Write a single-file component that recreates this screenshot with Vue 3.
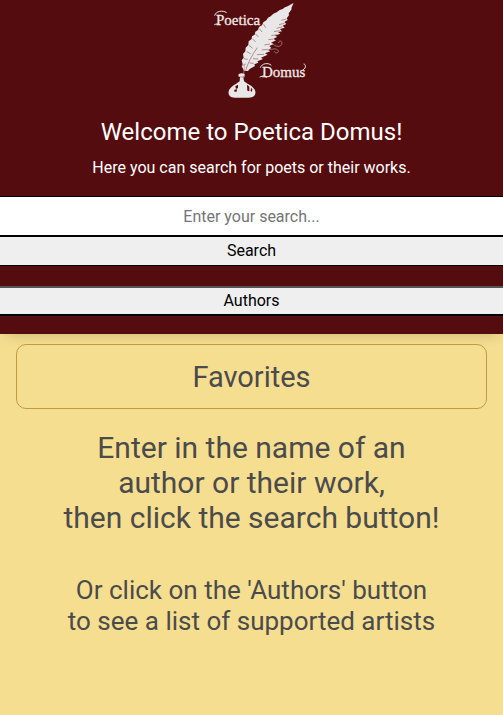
<script setup>
import { ref } from 'vue'

const query = ref('')
</script>

<template>
  <div class="page">
    <header class="banner">
      <svg class="logo" viewBox="191 0 121 100" role="img" aria-label="Poetica Domus">
        <g transform="translate(205 0) scale(0.33333)">
          <path
            class="ink"
            d="M266 9 C255 13 249 20 240 22 L233 27 L224 30 L215 37 L205 41 L197 49 L189 53 L184 61 L175 67 L171 76 L162 81 L159 90 L151 95 L149 104 L141 109 L140 117 L131 124 L130 135 L122 143 L121 154 L114 162 L116 173 L110 181 L113 193 L110 199 L117 212 L129 213 L134 207 L150 198 L148 193 L160 188 L157 184 L174 177 L168 173 L188 164 L180 160 L196 154 L189 150 L199 144 L193 138 L206 132 L198 128 L213 121 L205 117 L217 110 L209 107 L226 101 L219 96 L231 94 L225 87 L239 83 L233 77 L244 72 L238 66 L248 60 L245 55 L252 46 L251 40 L259 29 L260 22 Z"
          />
          <path
            class="cut"
            d="M122 211 C129 188 141 165 157 143 M112 197 L122 192 M116 176 L128 178 M125 155 L137 161 M132 136 L143 145 M142 116 L152 126 M151 101 L160 111 M163 86 L171 96 M176 73 L182 83 M243 57 L229 61 M238 70 L222 74 M232 80 L215 85 M224 92 L207 95 M216 104 L199 107 M205 117 L190 119 M195 132 L178 135 M188 148 L170 150 M177 163 L156 164 M160 177 L144 176 M146 190 L134 189"
          />
          <path
            class="line"
            d="M119 191 L116 222 M199 127 C211 143 230 143 231 129 C231 121 220 121 221 129 M184 150 C197 151 210 142 218 150 C226 158 210 163 208 154"
          />
          <path
            class="ink"
            d="M101 222 Q110 218 119 222 L120 229 L116 231 L117 244 C128 253 148 260 151 274 C153 288 144 293 131 293 L90 293 C76 293 69 286 71 274 C75 260 93 253 104 244 L105 231 L100 229 Z"
          />
          <path
            class="cut"
            d="M106 231 L117 231 M119 224 L115 239"
          />
          <path
            class="hole"
            d="M91 259 L99 254 L99 264 L93 267 Z M88 269 L96 268 L95 275 L88 275 Z M126 254 L133 260 L133 274 L127 272 Z M138 263 L142 268 L141 275 L137 274 Z"
          />
          <path
            class="flourish"
            d="M29 47 C32 33 53 30 65 38 M28 74 Q35 69 44 74 M166 203 C170 190 190 187 199 196 M164 231 Q175 224 186 232 M296 192 C303 193 304 203 294 210"
          />
        </g>
        <text class="wordmark" x="216" y="25">Poetica</text>
        <text class="wordmark" x="262" y="77">Domus</text>
      </svg>
      <h1 class="title">Welcome to Poetica Domus!</h1>
      <p class="intro">Here you can search for poets or their works.</p>
      <form class="search" @submit.prevent>
        <input
          v-model="query"
          class="field"
          type="text"
          placeholder="Enter your search..."
          aria-label="Search poets or works"
        />
        <button class="button submit" type="submit">Search</button>
      </form>
      <button class="button authors" type="button">Authors</button>
    </header>

    <main class="content">
      <h2 class="favorites">Favorites</h2>
      <p class="hint">
        Enter in the name of an<br />author or their work,<br />then click the search button!
      </p>
      <p class="subhint">
        Or click on the 'Authors' button<br />to see a list of supported artists
      </p>
    </main>
  </div>
</template>

<style>
body {
  background: #f5de90;
}
</style>

<style scoped>
.page {
  font-family: Roboto, sans-serif;
  text-align: center;
}

.banner {
  padding-bottom: 18px;
  background: #540c0e;
  color: #fff;
  box-shadow: 0 8px 12px -6px rgba(0, 0, 0, 0.15);
}

.logo {
  display: block;
  width: 121px;
  height: 100px;
  margin: 0 auto;
}

.ink {
  fill: #e9e7e7;
}

.cut {
  fill: none;
  stroke: #8d6263;
  stroke-width: 2;
}

.line {
  fill: none;
  stroke: #b79c9d;
  stroke-width: 2;
}

.hole {
  fill: #540c0e;
}

.flourish {
  fill: none;
  stroke: #e9e7e7;
  stroke-width: 3;
}

.wordmark {
  fill: #f1e9e9;
  stroke: #f1e9e9;
  stroke-width: 0.3;
  font-family: "Liberation Serif", serif;
  font-size: 15px;
}

.title {
  margin: 0;
  padding-top: 18px;
  font-size: 24px;
  font-weight: 400;
  line-height: 28px;
}

.intro {
  margin: 12px 0 18px;
  font-size: 16px;
  font-weight: 400;
  line-height: 20px;
}

.search {
  display: flex;
  flex-direction: column;
  margin-bottom: 20px;
}

.field,
.button {
  box-sizing: border-box;
  width: 100%;
  margin: 0;
  border: 0 solid #000;
  border-radius: 0;
  font-family: inherit;
  font-size: 16px;
  text-align: center;
}

.field {
  height: 40px;
  padding: 0 8px;
  border-width: 1px 0;
  background: #fff;
  color: #000;
}

.field::placeholder {
  color: #757575;
}

.button {
  display: block;
  height: 30px;
  padding: 0 0 2px;
  background: #efefef;
  color: #000;
}

.submit {
  border-width: 1px 0;
}

.authors {
  border-width: 2px 0;
  border-top-color: #555;
}

.content {
  padding: 10px 16px;
  color: #4b4b4b;
}

.favorites {
  margin: 0;
  padding: 15px 14px 13px;
  border: 1px solid #be9c46;
  border-radius: 10px;
  font-size: 29px;
  font-weight: 400;
  line-height: 35px;
}

.hint {
  margin: 21px 0 0;
  font-size: 30px;
  line-height: 35px;
}

.subhint {
  margin: 40px 0 0;
  font-size: 26px;
  line-height: 31px;
}
</style>
